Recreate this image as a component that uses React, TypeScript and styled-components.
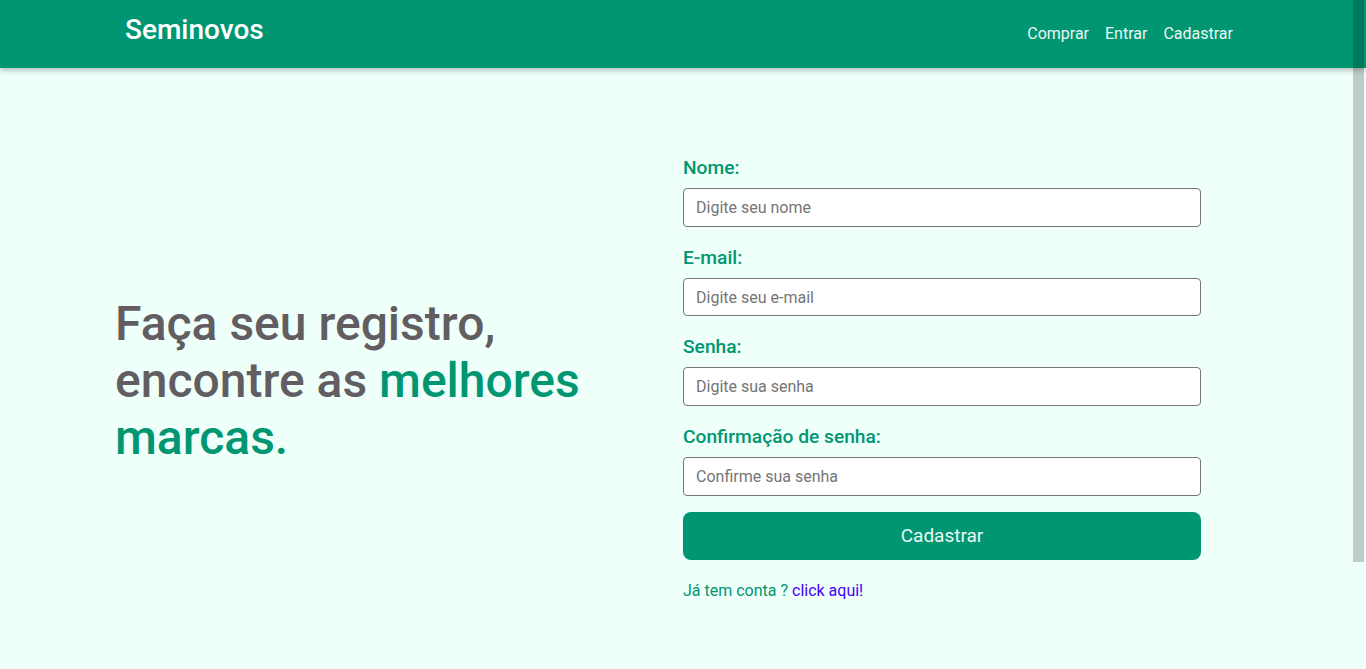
import React from "react";
import styled, { createGlobalStyle } from "styled-components";

const GREEN = "#009672";

const GlobalStyle = createGlobalStyle`
  * { box-sizing: border-box; }
  html, body { margin: 0; padding: 0; }
  body {
    background: #effffa;
    font-family: Roboto, "Noto Sans", "Liberation Sans", sans-serif;
  }
`;

const ScrollThumb = styled.div`
  position: fixed;
  top: 0;
  right: 2px;
  width: 11px;
  height: 562px;
  background: rgba(0, 0, 0, 0.2);
  z-index: 10;
  pointer-events: none;
`;

const Header = styled.header`
  height: 68px;
  background: ${GREEN};
  box-shadow: 0 2px 6px rgba(0, 0, 0, 0.28);
  position: relative;
  z-index: 1;
`;

const HeaderInner = styled.div`
  height: 100%;
  padding: 0 133px 0 125px;
  display: flex;
  align-items: center;
  justify-content: space-between;
`;

const Logo = styled.h1`
  margin: 0 0 10px 0;
  font-size: 28px;
  font-weight: 500;
  color: #ffffff;
`;

const Nav = styled.nav`
  display: flex;
  gap: 16px;
  margin-bottom: 2px;
`;

const NavLink = styled.a`
  font-size: 16px;
  color: #e8f7f1;
  text-decoration: none;
  cursor: pointer;
`;

const Main = styled.main`
  padding: 88px 115px 197px 115px;
  display: grid;
  grid-template-columns: 568px 568px;
  align-items: center;
`;

const Headline = styled.h2`
  margin: 5px 0 0 0;
  font-size: 48px;
  font-weight: 500;
  line-height: 57px;
  color: #625d61;
`;

const Accent = styled.span`
  color: ${GREEN};
`;

const Form = styled.form`
  width: 518px;
  display: flex;
  flex-direction: column;
`;

const Field = styled.div<{ $last?: boolean }>`
  display: flex;
  flex-direction: column;
  gap: 9px;
  margin-bottom: ${(p) => (p.$last ? "16px" : "19px")};
`;

const Label = styled.label`
  font-size: 19.2px;
  font-weight: 500;
  color: ${GREEN};
`;

const Input = styled.input`
  height: 38.7px;
  border: 1px solid #767676;
  border-radius: 4px;
  background: #ffffff;
  padding: 0 12px;
  font-family: inherit;
  font-size: 16px;
  color: #333;
  outline: none;
  &::placeholder {
    color: #757575;
  }
`;

const Button = styled.button`
  height: 48px;
  border: none;
  border-radius: 8px;
  background: ${GREEN};
  color: #eef8f4;
  font-family: inherit;
  font-size: 19px;
  cursor: pointer;
`;

const Footnote = styled.p`
  margin: 21px 0 0 0;
  font-size: 16px;
  color: ${GREEN};
`;

const Link = styled.a`
  color: #4400ff;
  text-decoration: none;
  cursor: pointer;
`;

const fields = [
  { id: "nome", label: "Nome:", placeholder: "Digite seu nome", type: "text" },
  { id: "email", label: "E-mail:", placeholder: "Digite seu e-mail", type: "email" },
  { id: "senha", label: "Senha:", placeholder: "Digite sua senha", type: "password" },
  { id: "confirma", label: "Confirmação de senha:", placeholder: "Confirme sua senha", type: "password" },
];

export default function App() {
  return (
    <>
      <GlobalStyle />
      <ScrollThumb aria-hidden="true" />
      <Header>
        <HeaderInner>
          <Logo>Seminovos</Logo>
          <Nav>
            <NavLink>Comprar</NavLink>
            <NavLink>Entrar</NavLink>
            <NavLink>Cadastrar</NavLink>
          </Nav>
        </HeaderInner>
      </Header>
      <Main>
        <Headline>
          Faça seu registro,
          <br />
          encontre as <Accent>melhores</Accent>
          <br />
          <Accent>marcas.</Accent>
        </Headline>
        <Form onSubmit={(e) => e.preventDefault()}>
          {fields.map((f, i) => (
            <Field key={f.id} $last={i === fields.length - 1}>
              <Label htmlFor={f.id}>{f.label}</Label>
              <Input id={f.id} type={f.type} placeholder={f.placeholder} />
            </Field>
          ))}
          <Button type="submit">Cadastrar</Button>
          <Footnote>
            Já tem conta ? <Link>click aqui!</Link>
          </Footnote>
        </Form>
      </Main>
    </>
  );
}
